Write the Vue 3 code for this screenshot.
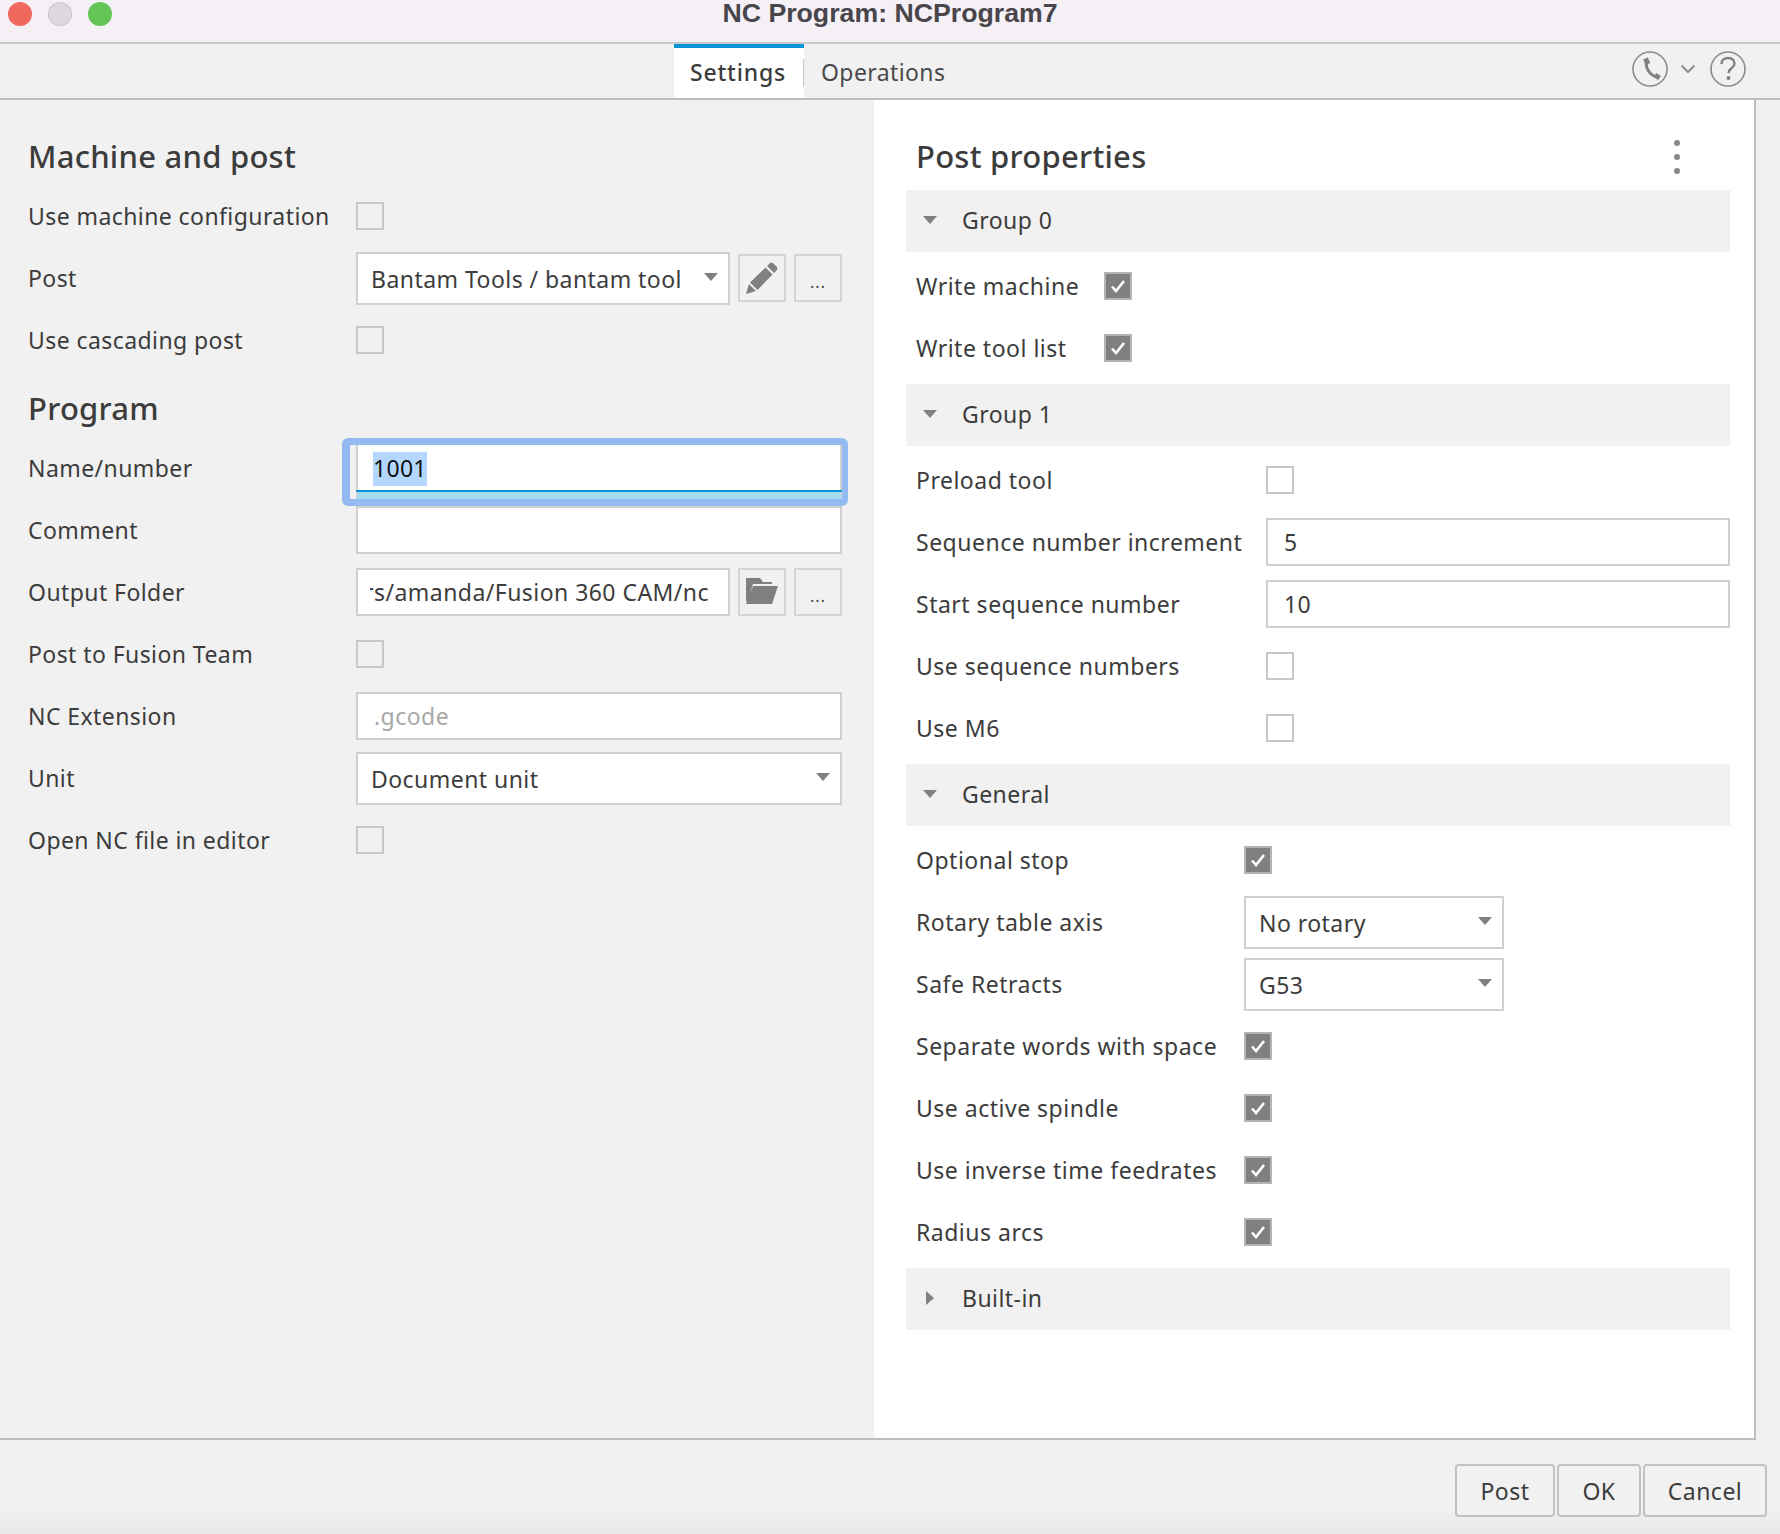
<script setup>
const leftTop = [
  { label: 'Use machine configuration', type: 'check' },
  { label: 'Post', type: 'select', value: 'Bantam Tools / bantam tool', action: 'pencil' },
  { label: 'Use cascading post', type: 'check' }
]
const leftProgram = [
  { label: 'Name/number', type: 'focus', value: '1001' },
  { label: 'Comment', type: 'input', value: '' },
  { label: 'Output Folder', type: 'path', value: '/Users/amanda/Fusion 360 CAM/nc', action: 'folder' },
  { label: 'Post to Fusion Team', type: 'check' },
  { label: 'NC Extension', type: 'input', value: '.gcode', dim: true },
  { label: 'Unit', type: 'select', value: 'Document unit' },
  { label: 'Open NC file in editor', type: 'check' }
]
const groups = [
  {
    name: 'Group 0', open: true, col: 'col-a',
    rows: [
      { label: 'Write machine', type: 'check', on: true },
      { label: 'Write tool list', type: 'check', on: true }
    ]
  },
  {
    name: 'Group 1', open: true, col: 'col-b',
    rows: [
      { label: 'Preload tool', type: 'check' },
      { label: 'Sequence number increment', type: 'input', value: '5' },
      { label: 'Start sequence number', type: 'input', value: '10' },
      { label: 'Use sequence numbers', type: 'check' },
      { label: 'Use M6', type: 'check' }
    ]
  },
  {
    name: 'General', open: true, col: 'col-c',
    rows: [
      { label: 'Optional stop', type: 'check', on: true },
      { label: 'Rotary table axis', type: 'select', value: 'No rotary' },
      { label: 'Safe Retracts', type: 'select', value: 'G53' },
      { label: 'Separate words with space', type: 'check', on: true },
      { label: 'Use active spindle', type: 'check', on: true },
      { label: 'Use inverse time feedrates', type: 'check', on: true },
      { label: 'Radius arcs', type: 'check', on: true }
    ]
  },
  { name: 'Built-in', open: false, col: 'col-c', rows: [] }
]
</script>

<template>
  <div class="win">
    <div class="titlebar">
      <div class="lights"><i class="red" /><i class="grey" /><i class="green" /></div>
      <span class="title">NC Program: NCProgram7</span>
    </div>

    <div class="tabbar">
      <div class="tab active">Settings</div>
      <div class="tab">Operations</div>
      <div class="tools">
        <svg width="36" height="36" viewBox="0 0 36 36" fill="none">
          <circle cx="18" cy="18" r="17" stroke="#8c8c8c" stroke-width="1.600" />
          <path d="M14.500 9.500C13 17 18 24.500 25 26" stroke="#808080" stroke-width="3" />
          <path d="M13.500 7.500L16 13M23 24l4.500 3" stroke="#808080" stroke-width="5" />
        </svg>
        <svg class="chev" width="16" height="10" viewBox="0 0 16 10" fill="none">
          <path d="M1.500 1.500L8 8l6.500-6.500" stroke="#8c8c8c" stroke-width="2" />
        </svg>
        <svg width="36" height="36" viewBox="0 0 36 36" fill="none">
          <circle cx="18" cy="18" r="17" stroke="#8c8c8c" stroke-width="1.600" />
          <path d="M11.500 13c0-8 13-8 13-.5 0 5-6 4.500-6 9.500" stroke="#808080" stroke-width="2.400" />
          <circle cx="18.500" cy="27" r="2" fill="#808080" />
        </svg>
      </div>
    </div>

    <div class="body">
      <section class="left">
        <h2>Machine and post</h2>
        <div v-for="r in leftTop" :key="r.label" class="row">
          <label>{{ r.label }}</label>
          <span v-if="r.type === 'check'" class="check" />
          <div v-else class="field-group">
            <div class="select narrow">
              <span>{{ r.value }}</span><i class="caret" />
            </div>
            <button class="icon-btn">
              <svg width="34" height="34" viewBox="0 0 34 34">
                <path d="M24.500 2.500a3 3 0 0 1 4 0l3 3a3 3 0 0 1 0 4L29 12l-7-7z M20.500 6.500l7 7L12.500 29l-7.500-7.500z M4 23l7 7L1 33z" fill="#808080" />
              </svg>
            </button>
            <button class="icon-btn dots">...</button>
          </div>
        </div>

        <h2 class="second">Program</h2>
        <div v-for="r in leftProgram" :key="r.label" class="row">
          <label>{{ r.label }}</label>
          <span v-if="r.type === 'check'" class="check" />
          <div v-else-if="r.type === 'focus'" class="focus-wrap">
            <div class="focus-ring" />
            <div class="focus-input"><span class="sel">{{ r.value }}</span></div>
          </div>
          <div v-else-if="r.type === 'input'" class="input wide" :class="{ dim: r.dim }">{{ r.value }}</div>
          <div v-else-if="r.type === 'select'" class="select wide">
            <span>{{ r.value }}</span><i class="caret" />
          </div>
          <div v-else class="field-group">
            <div class="input narrow path"><div class="path-clip">{{ r.value }}</div></div>
            <button class="icon-btn">
              <svg width="34" height="32" viewBox="0 0 34 32">
                <path d="M1 2h14l3 4h9v2H8L3 24l-2 2z M8 10h25l-6 18H1z" fill="#808080" />
              </svg>
            </button>
            <button class="icon-btn dots">...</button>
          </div>
        </div>
      </section>

      <section class="right">
        <div class="right-head">
          <h2>Post properties</h2>
          <div class="more"><i /><i /><i /></div>
        </div>
        <div v-for="g in groups" :key="g.name" class="group">
          <div class="group-head">
            <i :class="g.open ? 'tri-down' : 'tri-right'" />
            <span>{{ g.name }}</span>
          </div>
          <div v-if="g.rows.length" class="group-rows" :class="g.col">
            <div v-for="r in g.rows" :key="r.label" class="prop">
              <label>{{ r.label }}</label>
              <span v-if="r.type === 'check'" class="check" :class="{ on: r.on }">
                <svg v-if="r.on" width="16" height="14" viewBox="0 0 16 14" fill="none">
                  <path d="M2 7.500L6 12 14 2" stroke="#fff" stroke-width="2.600" />
                </svg>
              </span>
              <div v-else-if="r.type === 'input'" class="input prop-input">{{ r.value }}</div>
              <div v-else class="select prop-select">
                <span>{{ r.value }}</span><i class="caret" />
              </div>
            </div>
          </div>
        </div>
      </section>
    </div>

    <div class="footer">
      <button class="btn post">Post</button>
      <button class="btn ok">OK</button>
      <button class="btn cancel">Cancel</button>
    </div>
  </div>
</template>

<style scoped>
* { box-sizing: border-box }
.win {
  width: 1780px; height: 1534px; overflow: hidden;
  display: flex; flex-direction: column;
  background: #f1f1f1; color: #3c3c3c;
  font-family: "Noto Sans", sans-serif; font-size: 23px;
}
.titlebar {
  height: 44px; flex: none; position: relative;
  background: #f5f0f6; border-bottom: 2px solid #cbc9cc;
  display: flex; justify-content: center;
}
.lights { position: absolute; left: 8px; top: 2px; display: flex; gap: 16px }
.lights i { width: 24px; height: 24px; border-radius: 50% }
.red { background: #f0695e }
.grey { background: #dcd8de; box-shadow: inset 0 0 0 1px #ccc8ce }
.green { background: #62c554 }
.title {
  font-family: "Liberation Sans", sans-serif; font-weight: 700; font-size: 26.700px;
  color: #48464a; line-height: 26px;
}
.tabbar {
  height: 56px; flex: none; padding-left: 674px; position: relative;
  display: flex; width: 1780px;
  border-bottom: 2px solid #bdbdbd;
}
.tab { height: 54px; padding-top: 13px; line-height: 30px; letter-spacing: .4px }
.tab.active {
  width: 130px; padding-left: 16px; background: #fff; font-weight: 500; letter-spacing: .8px;
  border-top: 4px solid #0696d7; padding-top: 9px;
  position: relative;
}
.tab.active::after {
  content: ''; position: absolute; right: 0; top: 11px; height: 28px; width: 1px; background: #c8c8c8;
}
.tab:not(.active) { padding-left: 17px; color: #4a4a4a }
.tools {
  position: absolute; left: 1632px; top: 7px;
  display: flex; align-items: center;
}
.tools .chev { margin: 0 14px 0 12px }
.body { flex: none; height: 1340px; display: flex; width: 1756px; border-bottom: 2px solid #bdbdbd }
.left { width: 874px; flex: none; padding: 0 32px 0 28px }
.right {
  flex: 1; background: #fff; border-right: 2px solid #bdbdbd;
  padding: 0 24px 0 32px;
}
h2 {
  font-size: 31px; font-weight: 500; margin: 0; color: #3c3c3c; letter-spacing: .25px;
  padding-top: 31px; line-height: 50px; box-sizing: content-box; height: 51px;
}
.left h2 { margin-bottom: 3px }
.left h2.second { padding-top: 12px; margin-bottom: 3px }
.row { height: 62px; display: flex; align-items: center }
.row label { width: 328px; flex: none; letter-spacing: .42px }
.check {
  width: 28px; height: 28px; border: 2px solid #c8c8c8; display: inline-flex;
  align-items: center; justify-content: center; flex: none;
}
.check.on { background: #808080; border-color: #b4b4b4 }
.field-group { display: flex; gap: 8px; align-items: center }
.select, .input {
  background: #fff; border: 2px solid #d0d0d0; display: flex; align-items: center;
  letter-spacing: .45px; white-space: nowrap; overflow: hidden;
}
.select { height: 53px; margin-top: 1px; padding-left: 13px; justify-content: space-between; padding-right: 10px }
.input { height: 48px; padding-left: 16px }
.narrow { width: 374px }
.wide { width: 486px }
.path { padding: 0 19px 0 12px }
.path-clip { width: 100%; overflow: hidden; display: flex; justify-content: flex-end }
.dim { color: #a8a8a8 }
.caret {
  width: 0; height: 0; border-left: 7px solid transparent; border-right: 7px solid transparent;
  border-top: 8px solid #808080; margin-bottom: 3px;
}
.icon-btn {
  width: 48px; height: 48px; background: #f1f1f1; border: 2px solid #d4d4d4; padding: 0;
  display: flex; align-items: center; justify-content: center; font-family: inherit;
}
.dots { font-size: 16px; color: #444; letter-spacing: 1px; padding-top: 8px }
.focus-wrap { position: relative; width: 486px; height: 54px; margin-top: 8px }
.focus-ring {
  position: absolute; left: -14px; top: -7px; right: -6px; bottom: -7px;
  border-style: solid; border-color: #93bbf1; border-width: 7px 6px 7px 8px; border-radius: 6px;
}
.focus-input {
  position: absolute; inset: 0; background: #fff;
  border-left: 2px solid #d0d0d0; border-right: 2px solid #d0d0d0;
  border-bottom: 7px solid #a6daf3; padding: 7px 0 0 15px;
}
.focus-input::after {
  content: ''; position: absolute; left: -2px; right: -2px; bottom: 0; height: 2px; background: #0696d7;
}
.sel { background: #b3d7ff; color: #111; display: inline-block; height: 34px; line-height: 33px; letter-spacing: .3px }
.right-head { display: flex; justify-content: space-between; height: 90px; padding-right: 50px }
.right-head h2 { margin-left: 10px }
.more { padding-top: 40px; display: flex; flex-direction: column; gap: 8px }
.more i { width: 6px; height: 6px; border-radius: 50%; background: #888 }
.group-head {
  height: 62px; background: #f1f1f1; display: flex; align-items: center; padding: 0 0 2px 17px;
  letter-spacing: .45px;
}
.group-head span { margin-left: 25px }
.tri-down {
  width: 0; height: 0; border-left: 7px solid transparent; border-right: 7px solid transparent;
  border-top: 8px solid #808080;
}
.tri-right {
  width: 0; height: 0; border-top: 7px solid transparent; border-bottom: 7px solid transparent;
  border-left: 8px solid #808080; margin-left: 3px; margin-right: 3px;
}
.group-rows { padding: 3px 0 5px 10px }
.prop { height: 62px; display: flex; align-items: center }
.prop label { flex: none; letter-spacing: .5px }
.col-a label { width: 188px }
.col-b label { width: 350px }
.col-c label { width: 328px }
.prop-input { width: 464px }
.prop-select { width: 260px }
.footer { flex: 1; background: linear-gradient(#f1f1f1 70%, #e9e9e9); display: flex; padding: 24px 13px 0 0; justify-content: flex-end; gap: 2px }
.btn {
  height: 53px; border: 2px solid #c2c2c2; border-radius: 4px; background: #f1f1f1;
  font-family: inherit; font-size: 23px; color: #3c3c3c; padding: 0; letter-spacing: .5px;
}
.post { width: 100px }
.ok { width: 84px }
.cancel { width: 124px }
</style>

<style>
html, body { margin: 0; background: #f1f1f1 }
</style>
